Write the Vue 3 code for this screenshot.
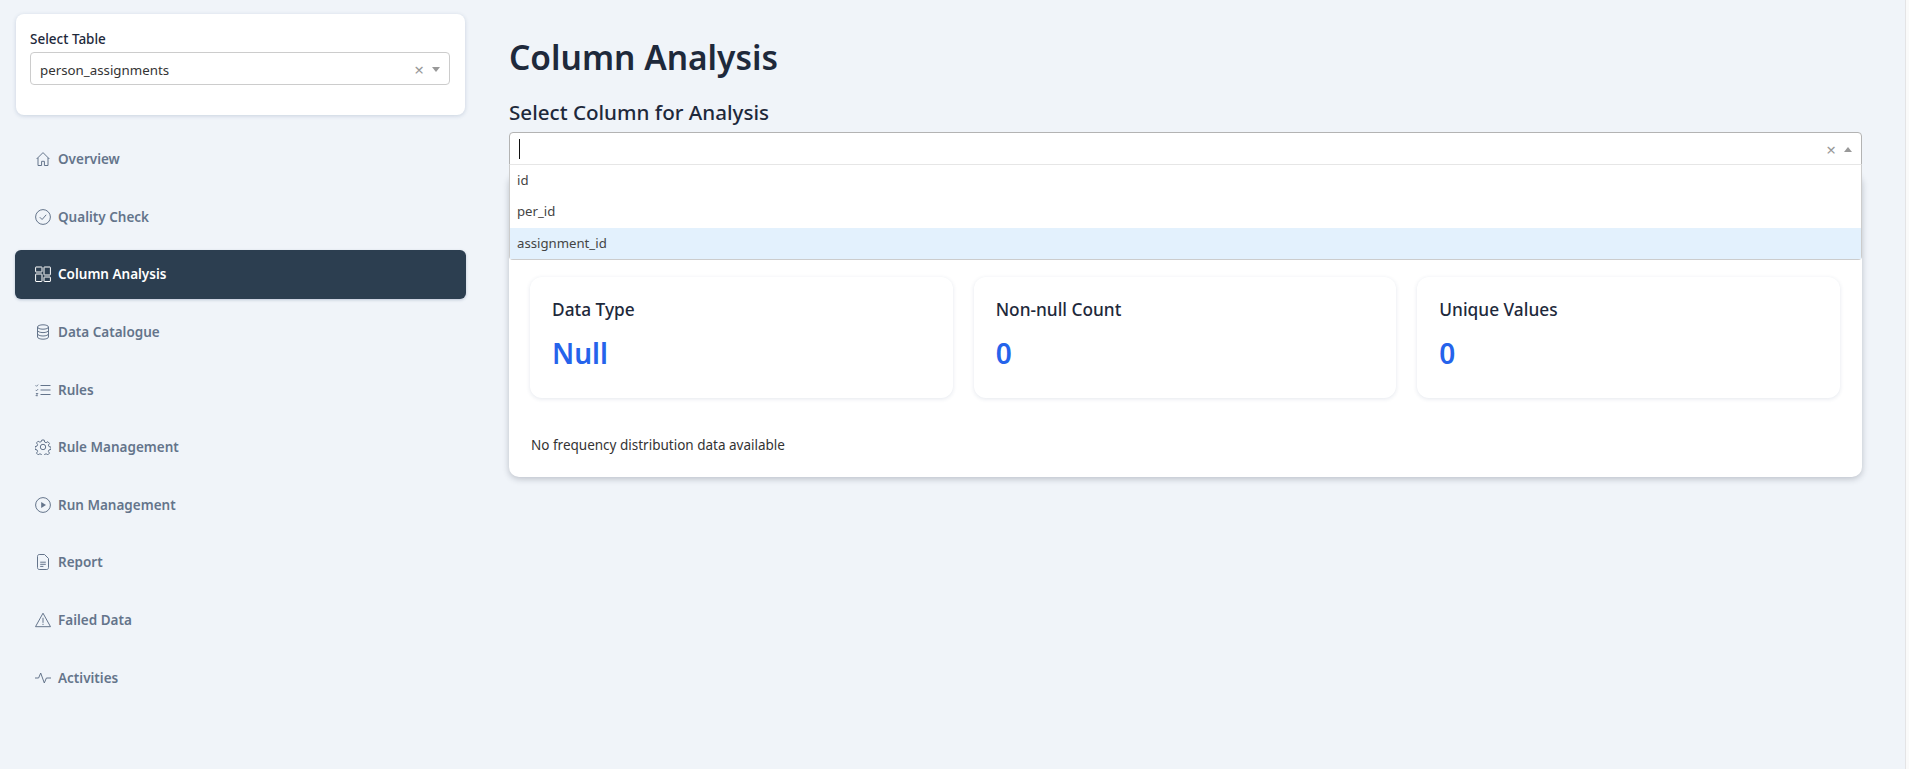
<script setup>
import { ref } from 'vue'

const navItems = ref([
  { label: 'Overview', icon: 'home' },
  { label: 'Quality Check', icon: 'check' },
  { label: 'Column Analysis', icon: 'grid', active: true },
  { label: 'Data Catalogue', icon: 'db' },
  { label: 'Rules', icon: 'list' },
  { label: 'Rule Management', icon: 'gear' },
  { label: 'Run Management', icon: 'play' },
  { label: 'Report', icon: 'file' },
  { label: 'Failed Data', icon: 'warn' },
  { label: 'Activities', icon: 'pulse' }
])

const metrics = ref([
  { title: 'Data Type', value: 'Null' },
  { title: 'Non-null Count', value: '0' },
  { title: 'Unique Values', value: '0' }
])

const columns = ref(['id', 'per_id', 'assignment_id'])
</script>

<template>
  <div class="page">
    <aside class="sidebar">
      <div class="table-card">
        <div class="table-label">Select Table</div>
        <div class="select">
          <span class="select-value">person_assignments</span>
          <span class="clear">×</span>
          <span class="caret"></span>
        </div>
      </div>
      <nav class="nav">
        <a v-for="item in navItems" :key="item.label" class="nav-item" :class="{ active: item.active }">
          <svg class="nav-icon" viewBox="0 0 16 16" fill="none" stroke="currentColor" stroke-width="1">
            <template v-if="item.icon === 'home'">
              <path d="M1.6 8 8 1.6 14.4 8M3 6.8v7.7h3.6v-4.2h2.8v4.2H13V6.8" stroke-linejoin="round" />
            </template>
            <template v-else-if="item.icon === 'check'">
              <circle cx="8" cy="8" r="7.4" />
              <path d="M4.8 8.2 7.1 10.5 11.2 5.8" />
            </template>
            <template v-else-if="item.icon === 'grid'">
              <rect x=".6" y="1" width="6.4" height="5" rx=".4" />
              <rect x="9" y="1" width="6.4" height="8" rx=".4" />
              <rect x=".6" y="8" width="6.4" height="7.5" rx=".4" />
              <rect x="9" y="11" width="6.4" height="4.5" rx=".4" />
            </template>
            <template v-else-if="item.icon === 'db'">
              <ellipse cx="8" cy="3" rx="5.5" ry="2.2" />
              <path d="M2.5 3v10c0 1.2 2.5 2.2 5.5 2.2s5.5-1 5.500-2.200V3M2.500 6.400c0 1.200 2.500 2.200 5.500 2.200s5.500-1 5.500-2.200M2.500 9.800c0 1.200 2.500 2.200 5.500 2.200s5.500-1 5.500-2.200" />
            </template>
            <template v-else-if="item.icon === 'list'">
              <path d="M5.500 3.500h10M5.500 8h10M5.500 12.500h10" />
              <path d="M.6 3.400l.9.900 1.600-1.700M.6 7.900l.9.900 1.600-1.700M.9 11.500h2l-2 2.200h2" stroke-width=".9" />
            </template>
            <template v-else-if="item.icon === 'gear'">
              <circle cx="8" cy="8" r="2.700" />
              <path d="M6.800 1h2.400l.4 2 1.500.7 1.800-1 1.600 1.700-1.100 1.700.6 1.500 2 .5v2.300l-2 .5-.6 1.500 1.100 1.700-1.600 1.700-1.800-1-1.500.6-.4 2H6.800l-.4-2-1.500-.6-1.800 1-1.600-1.700 1.100-1.700-.6-1.500-2-.5V7.600l2-.5.6-1.500-1.100-1.700 1.600-1.700 1.800 1 1.500-.7z" stroke-linejoin="round" />
            </template>
            <template v-else-if="item.icon === 'play'">
              <circle cx="8" cy="8" r="7.400" />
              <path d="M6.200 5 11 8l-4.800 3z" fill="currentColor" stroke="none" />
            </template>
            <template v-else-if="item.icon === 'file'">
              <path d="M2.500 2.400c0-1 .7-1.900 1.700-1.900h5.300l4 4v9.100c0 1-.7 1.900-1.700 1.900H4.200c-1 0-1.700-.9-1.700-1.900z" stroke-linejoin="round" />
              <path d="M5.200 8.200h5.600M5.200 10.300h5.600M5.200 12.400h3.200" />
            </template>
            <template v-else-if="item.icon === 'warn'">
              <path d="M8 1.200 15.500 14.700H.5z" stroke-linejoin="round" />
              <path d="M8 5.800v5M8 11.800v1.200" />
            </template>
            <template v-else>
              <path d="M0 8h3.600L5.700 3l3.600 10L11.400 8H16" stroke-linejoin="round" />
            </template>
          </svg>
          <span>{{ item.label }}</span>
        </a>
      </nav>
    </aside>

    <main class="main">
      <h1 class="title">Column Analysis</h1>
      <h3 class="subtitle">Select Column for Analysis</h3>
      <div class="column-picker">
        <div class="select open">
          <span class="cursor"></span>
          <span class="clear">×</span>
          <span class="caret up"></span>
        </div>
        <ul class="menu">
          <li v-for="col in columns" :key="col" :class="{ focused: col === 'assignment_id' }">{{ col }}</li>
        </ul>
      </div>
      <section class="panel">
        <div class="metrics">
          <div v-for="m in metrics" :key="m.title" class="metric">
            <div class="metric-title">{{ m.title }}</div>
            <div class="metric-value">{{ m.value }}</div>
          </div>
        </div>
        <p class="empty">No frequency distribution data available</p>
      </section>
    </main>
    <div class="scroll-edge"></div>
  </div>
</template>

<style>
html, body {
  margin: 0;
  background: #f0f4f9;
}
</style>

<style scoped>
.page {
  display: flex;
  min-height: 769px;
  box-sizing: border-box;
  background: #f0f4f9;
  font-family: "Noto Sans", "Open Sans", sans-serif;
  color: #1e293b;
  overflow: hidden;
}

.sidebar {
  width: 451px;
  margin-left: 15px;
  padding-top: 14px;
  flex-shrink: 0;
}

.table-card {
  height: 101px;
  box-sizing: border-box;
  margin: 0 1px;
  padding: 16px 15px 16px 14px;
  background: #fff;
  border-radius: 8px;
  box-shadow: 0 1px 4px rgba(30, 60, 110, 0.18);
}

.table-label {
  font-size: 13.5px;
  font-weight: 500;
  line-height: 20px;
  margin-bottom: 3px;
  margin-top: -1px;
  color: #1e293b;
}

.select {
  position: relative;
  height: 33px;
  box-sizing: border-box;
  display: flex;
  align-items: center;
  padding-left: 9px;
  border: 1px solid #ccc;
  border-radius: 4px;
  background: #fff;
  font-size: 13.3px;
  color: #333;
}

.select-value {
  position: relative;
  top: 1px;
}

.clear {
  position: absolute;
  right: 25px;
  top: 50%;
  transform: translateY(-50%);
  font-size: 17px;
  line-height: 1;
  color: #999;
}

.caret {
  position: absolute;
  right: 9px;
  top: 14px;
  border: 4px solid transparent;
  border-top: 5px solid #999;
  border-bottom: 0;
}

.caret.up {
  border-top: 0;
  border-bottom: 5px solid #999;
}

.nav {
  display: flex;
  flex-direction: column;
  gap: 8px;
  margin-top: 19.5px;
}

.nav-item {
  height: 49.6px;
  display: flex;
  align-items: center;
  gap: 7px;
  padding-left: 20px;
  border-radius: 6px;
  font-size: 13.5px;
  font-weight: 600;
  color: #64748b;
}

.nav-item.active {
  background: #2c3e50;
  color: #fff;
  box-shadow: 0 1px 3px rgba(30, 60, 110, 0.25);
}

.nav-icon {
  width: 16px;
  height: 16px;
  flex-shrink: 0;
}

.main {
  width: 1353px;
  margin-left: 43px;
  padding-top: 32px;
}

.title {
  margin: 0;
  font-size: 33.5px;
  line-height: 50px;
  font-weight: 600;
  color: #1e293b;
}

.subtitle {
  margin: 16px 0 0;
  font-size: 20.6px;
  line-height: 29px;
  font-weight: 500;
  color: #1e293b;
}

.column-picker {
  position: relative;
  margin-top: 5px;
  z-index: 2;
}

.select.open {
  border-color: #b3b3b3;
  border-radius: 4px 4px 0 0;
}

.cursor {
  width: 1px;
  height: 20px;
  background: #111;
}

.menu {
  position: absolute;
  top: 32px;
  left: 0;
  right: 0;
  margin: 0;
  padding: 0;
  list-style: none;
  background: #fff;
  border: 1px solid #ccc;
  border-top-color: #e6e6e6;
  border-radius: 0 0 4px 4px;
  font-size: 13.2px;
  color: #444;
}

.menu li {
  height: 31.3px;
  line-height: 31.3px;
  padding-left: 7px;
}

.menu li.focused {
  background: #e3f1fd;
}

.panel {
  margin-top: 8px;
  height: 304px;
  box-sizing: border-box;
  padding: 104px 22px 0 21px;
  background: #fff;
  border-radius: 10px;
  box-shadow: 0 2px 6px rgba(30, 40, 60, 0.25);
}

.metrics {
  display: grid;
  grid-template-columns: repeat(3, 1fr);
  gap: 21px;
}

.metric {
  height: 121px;
  box-sizing: border-box;
  padding: 21px 22px;
  border-radius: 12px;
  background: #fff;
  box-shadow: 0 1px 4px rgba(30, 60, 110, 0.12);
}

.metric-title {
  font-size: 17.3px;
  font-weight: 500;
  line-height: 24px;
  color: #1e293b;
}

.metric-value {
  margin-top: 11px;
  font-size: 28px;
  font-weight: 600;
  line-height: 40px;
  color: #2563eb;
}

.empty {
  margin: 37px 0 0 1px;
  font-size: 13.5px;
  line-height: 20px;
  color: #333;
}

.scroll-edge {
  margin-left: auto;
  width: 3px;
  flex-shrink: 0;
  border-left: 1px solid #e4e4e6;
  background: #fafafa;
}
</style>
